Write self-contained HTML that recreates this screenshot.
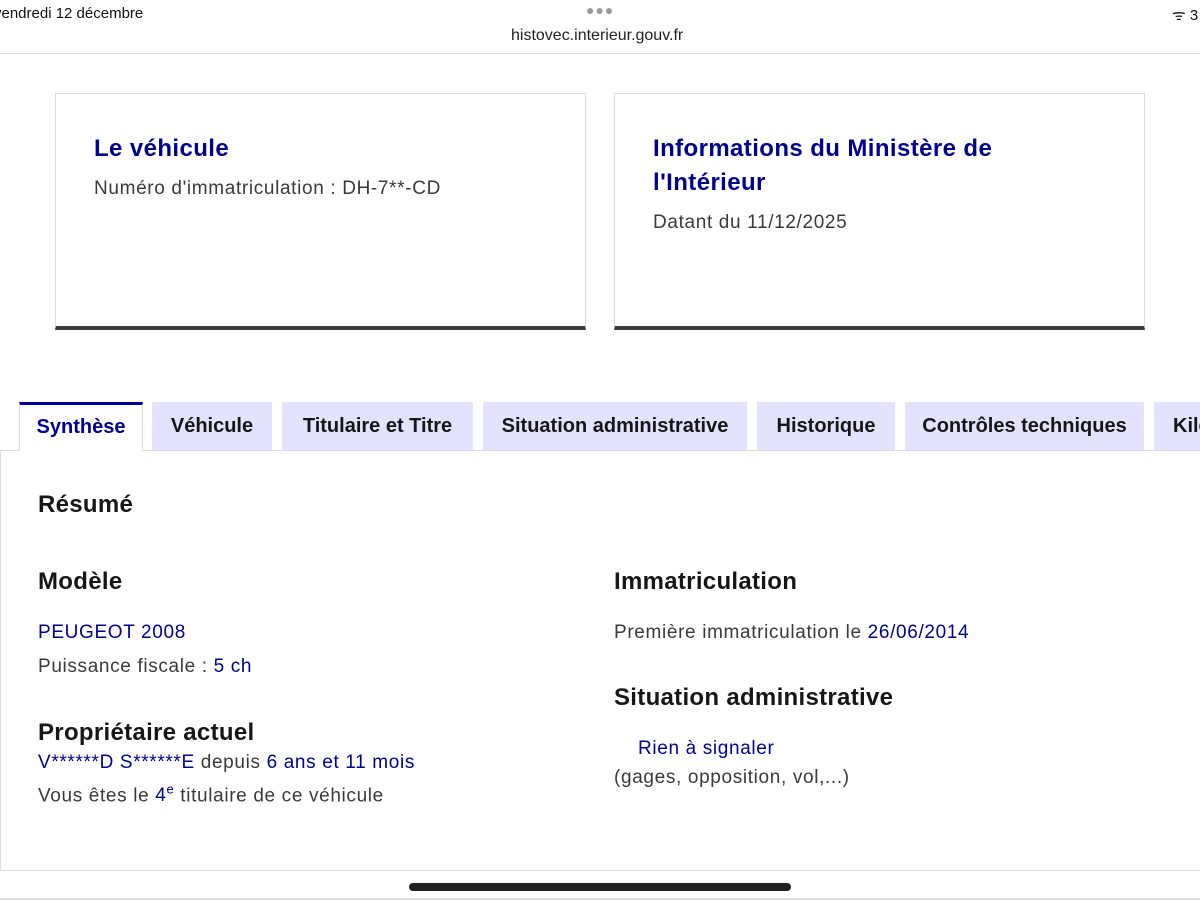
<!DOCTYPE html>
<html><head><meta charset="utf-8"><style>
*{margin:0;padding:0;box-sizing:border-box}
html,body{width:1200px;height:900px;overflow:hidden}
body{background:#fff;font-family:"Liberation Sans",sans-serif;color:#3a3a3a;position:relative}
.a{position:absolute;white-space:nowrap}
.blue{color:#000091}
.card{position:absolute;top:93px;height:237px;border:1px solid #ddd;border-bottom:4px solid #3a3a3a;background:#fff}
.card h2{position:absolute;left:38px;top:38px;font-size:24px;font-weight:bold;color:#000091;line-height:34px;letter-spacing:0.4px}
.tab{position:absolute;top:402px;height:48px;background:#e3e3fd;font-size:20px;font-weight:bold;color:#161616;line-height:48px;text-align:center;overflow:hidden;white-space:nowrap}
h3{position:absolute;font-size:24px;font-weight:bold;color:#161616;white-space:nowrap;letter-spacing:0.3px}
.t{position:absolute;font-size:19px;white-space:nowrap;letter-spacing:0.65px}
</style></head><body>
<div class="a" style="left:-6px;top:5px;font-size:15px;color:#111">vendredi 12 décembre</div>
<div class="a" style="left:586px;top:2px;font-size:14px;color:#999;letter-spacing:1px">●●●</div>
<div class="a" style="left:511px;top:27px;font-size:16px;color:#222">histovec.interieur.gouv.fr</div>
<div class="a" style="left:1172px;top:5px;font-size:15px;color:#111">ᯤ 3</div>
<div class="a" style="left:0;top:53px;width:1200px;height:1px;background:#ddd"></div>

<div class="card" style="left:55px;width:531px">
<h2>Le véhicule</h2>
<div class="t" style="left:38px;top:84px">Numéro d'immatriculation : DH-7**-CD</div>
</div>
<div class="card" style="left:614px;width:531px">
<h2>Informations du Ministère de<br>l'Intérieur</h2>
<div class="t" style="left:38px;top:118px">Datant du 11/12/2025</div>
</div>

<div class="a" style="left:0;top:450px;width:1200px;height:421px;border:1px solid #ddd;border-right:none"></div>
<div class="tab" style="left:19px;width:124px;background:#fff;border:1px solid #ddd;border-top:3px solid #000091;border-bottom:none;height:49px;color:#000091;line-height:44px">Synthèse</div>
<div class="tab" style="left:152px;width:120px">Véhicule</div>
<div class="tab" style="left:282px;width:191px">Titulaire et Titre</div>
<div class="tab" style="left:483px;width:264px">Situation administrative</div>
<div class="tab" style="left:757px;width:138px">Historique</div>
<div class="tab" style="left:905px;width:239px">Contrôles techniques</div>
<div class="tab" style="left:1154px;width:46px;text-align:left;padding-left:19px">Kilométrage</div>

<h3 style="left:38px;top:491px">Résumé</h3>
<h3 style="left:38px;top:568px">Modèle</h3>
<div class="t blue" style="left:38px;top:622px">PEUGEOT 2008</div>
<div class="t" style="left:38px;top:656px">Puissance fiscale : <span class="blue">5 ch</span></div>
<h3 style="left:38px;top:719px">Propriétaire actuel</h3>
<div class="t" style="left:38px;top:752px"><span class="blue">V******D S******E</span> depuis <span class="blue">6 ans et 11 mois</span></div>
<div class="t" style="left:38px;top:782px">Vous êtes le <span class="blue">4<sup style="font-size:13px">e</sup></span> titulaire de ce véhicule</div>

<h3 style="left:614px;top:568px">Immatriculation</h3>
<div class="t" style="left:614px;top:622px">Première immatriculation le <span class="blue">26/06/2014</span></div>
<h3 style="left:614px;top:684px">Situation administrative</h3>
<div class="t blue" style="left:638px;top:738px">Rien à signaler</div>
<div class="t" style="left:614px;top:767px">(gages, opposition, vol,...)</div>

<div class="a" style="left:409px;top:883px;width:382px;height:8px;border-radius:4px;background:#222"></div>
<div class="a" style="left:0;top:898px;width:1200px;height:2px;background:#ddd"></div>
</body></html>
